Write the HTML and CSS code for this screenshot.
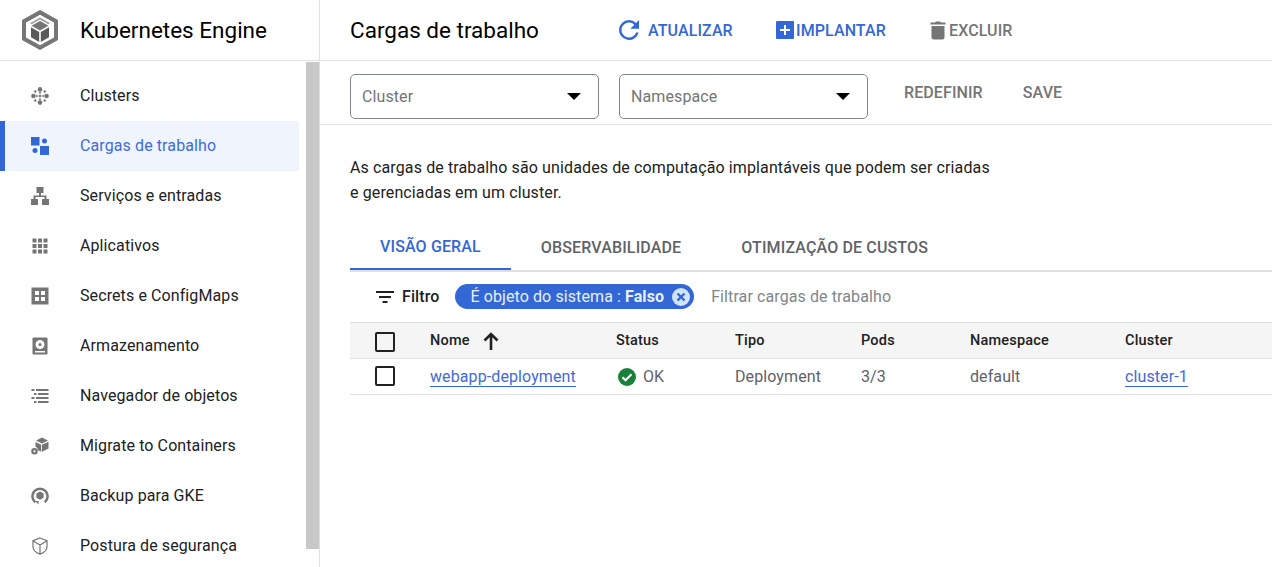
FILE: index.html
```html
<!DOCTYPE html>
<html lang="en">
<head>
    <meta charset="UTF-8">
    <title>Cargas de trabalho - Kubernetes Engine</title>
    <link rel="stylesheet" href="styles.css">
</head>
<body>
<div class="app">
    <aside class="sidebar">
        <div class="brand">
            <svg class="brand-logo" viewBox="0 0 36 40" width="36" height="40">
                <path d="M18 0 L36 10 V30 L18 40 L0 30 V10 Z M18 4.800 L4 12.600 V27.400 L18 35.200 L32 27.400 V12.600 Z" fill="#757575" fill-rule="evenodd"/>
                <path d="M18 7.500 L28 13.200 L26.300 14.200 L18 9.500 L9.700 14.200 L8 13.200 Z" fill="#9e9e9e"/>
                <path d="M18 11 L26.500 15.800 L18 20.600 L9.500 15.800 Z" fill="#757575"/>
                <path d="M9 17.200 L17.200 21.900 V32 L9 27.300 Z M27 17.200 L18.800 21.900 V32 L27 27.300 Z" fill="#5a5a5a"/>
            </svg>
            <span class="brand-name">Kubernetes Engine</span>
        </div>
        <div class="nav-wrap">
            <nav class="nav">
                <a class="nav-item">
                    <svg class="nav-icon" viewBox="0 0 18 18"><g fill="#757575"><circle cx="9" cy="2.400" r="2.300"/><circle cx="9" cy="15.600" r="2.300"/><circle cx="2.400" cy="9" r="2.300"/><circle cx="15.600" cy="9" r="2.300"/><circle cx="9" cy="9" r="1.300"/><circle cx="9" cy="5.800" r="1"/><circle cx="9" cy="12.200" r="1"/><circle cx="5.800" cy="9" r="1"/><circle cx="12.200" cy="9" r="1"/><circle cx="4.300" cy="4.500" r="1.200"/><circle cx="13.700" cy="4.500" r="1.200"/><circle cx="4.300" cy="13.500" r="1.200"/><circle cx="13.700" cy="13.500" r="1.200"/></g></svg>
                    <span>Clusters</span>
                </a>
                <a class="nav-item active">
                    <svg class="nav-icon" viewBox="0 0 18 18"><g fill="#3367d6"><rect x="0" y="0" width="8.500" height="8.500"/><rect x="9" y="9" width="9" height="9"/><circle cx="13.500" cy="4" r="2.500"/><circle cx="4" cy="13.500" r="2.500"/></g></svg>
                    <span>Cargas de trabalho</span>
                </a>
                <a class="nav-item">
                    <svg class="nav-icon" viewBox="0 0 18 18"><path fill="#757575" d="M5.500 0h7v6h-2.500v2.500h5.500v3.500h2.500v6h-7v-6h2.500v-2h-9v2h2.500v6h-7v-6h2.500v-3.500h5.500v-2.500h-2.500z"/></svg>
                    <span>Serviços e entradas</span>
                </a>
                <a class="nav-item">
                    <svg class="nav-icon" viewBox="0 0 18 18"><path fill="#757575" d="M1.500 1.500h4v4h-4zM7 1.500h4v4h-4zM12.500 1.500h4v4h-4zM1.500 7h4v4h-4zM7 7h4v4h-4zM12.500 7h4v4h-4zM1.500 12.500h4v4h-4zM7 12.500h4v4h-4zM12.500 12.500h4v4h-4z"/></svg>
                    <span>Aplicativos</span>
                </a>
                <a class="nav-item">
                    <svg class="nav-icon" viewBox="0 0 18 18"><path fill="#757575" fill-rule="evenodd" d="M0.500 0.500h17v17h-17zM4 4v4h4v-4zM10 4v4h4v-4zM4 10v4h4v-4zM10 10v4h4v-4z"/></svg>
                    <span>Secrets e ConfigMaps</span>
                </a>
                <a class="nav-item">
                    <svg class="nav-icon" viewBox="0 0 18 18"><path fill="#757575" fill-rule="evenodd" d="M2.500 0.500h13a1 1 0 0 1 1 1v15a1 1 0 0 1-1 1h-13a1 1 0 0 1-1-1v-15a1 1 0 0 1 1-1zM9 3a4.500 4.500 0 1 0 0 9a4.500 4.500 0 0 0 0-9zM4 14v1.500h10v-1.500z"/><circle cx="9" cy="7.500" r="1.500" fill="#757575"/></svg>
                    <span>Armazenamento</span>
                </a>
                <a class="nav-item">
                    <svg class="nav-icon" viewBox="0 0 18 18"><path fill="#757575" d="M0.500 2h3v2h-3zM5 2h12.500v2h-12.500zM3 6h2.500v2h-2.500zM7 6h10.500v2h-10.500zM0.500 10h3v2h-3zM5 10h12.500v2h-12.500zM3 14h2.500v2h-2.500zM7 14h10.500v2h-10.500z"/></svg>
                    <span>Navegador de objetos</span>
                </a>
                <a class="nav-item">
                    <svg class="nav-icon" viewBox="0 0 18 18"><path fill="#757575" d="M11 0.500l6 3-6 3-6-3zM4.500 5l5.700 2.800v7l-3.200-1.600a4 4 0 0 0-2.500-3.400zM17.500 4.800v6.700l-6.500 3.300v-7z"/><path fill="#757575" fill-rule="evenodd" d="M3.500 11a3.300 3.300 0 1 0 0 6.600a3.300 3.300 0 0 0 0-6.600zM3.500 13.200a1.100 1.100 0 1 1 0 2.200a1.100 1.100 0 0 1 0-2.200z"/></svg>
                    <span>Migrate to Containers</span>
                </a>
                <a class="nav-item">
                    <svg class="nav-icon" viewBox="0 0 18 18"><path fill="none" stroke="#757575" stroke-width="2.400" d="M4.200 15.200a7.600 7.600 0 1 1 9.600 0"/><path fill="#757575" d="M9 4.600l3.600 2v4.200l-3.600 2-3.600-2v-4.200zM4 14h3.500v3.500z"/></svg>
                    <span>Backup para GKE</span>
                </a>
                <a class="nav-item">
                    <svg class="nav-icon" viewBox="0 0 18 18"><path fill="none" stroke="#757575" stroke-width="1.200" d="M9 1l7 2.700v6c0 3.500-3 6-7 7.500c-4-1.500-7-4-7-7.500v-6zM2.300 3.900l6.700 4.100l6.700-4.100M9 8v9"/></svg>
                    <span>Postura de segurança</span>
                </a>
            </nav>
            <div class="scrollbar"></div>
        </div>
    </aside>

    <main class="main">
        <header class="topbar">
            <h1 class="page-title">Cargas de trabalho</h1>
            <div class="actions">
                <a class="action blue refresh">
                    <svg viewBox="0 0 24 24" width="30" height="30"><path fill="#3367d6" d="M17.650 6.350A7.960 7.960 0 0 0 12 4a8 8 0 1 0 7.740 10h-2.080A6 6 0 1 1 12 6c1.660 0 3.140.69 4.220 1.780L13 11h7V4z"/></svg>
                    <span>ATUALIZAR</span>
                </a>
                <a class="action blue deploy">
                    <svg viewBox="0 0 18 18" width="18" height="18"><path fill="#3367d6" fill-rule="evenodd" d="M1 0h16a1 1 0 0 1 1 1v16a1 1 0 0 1-1 1h-16a1 1 0 0 1-1-1v-16a1 1 0 0 1 1-1zM8 4v4h-4v2h4v4h2v-4h4v-2h-4v-4z"/></svg>
                    <span>IMPLANTAR</span>
                </a>
                <a class="action grey remove">
                    <svg viewBox="0 0 16 20" width="16" height="20"><path fill="#757575" d="M1.500 6h13v11.500a2 2 0 0 1-2 2h-9a2 2 0 0 1-2-2zM0.500 2.500h4.500l1-1h4l1 1h4.500v2h-15z"/></svg>
                    <span>EXCLUIR</span>
                </a>
            </div>
        </header>

        <div class="filterbar">
            <div class="select"><span>Cluster</span><i class="caret"></i></div>
            <div class="select"><span>Namespace</span><i class="caret"></i></div>
            <a class="text-btn reset">REDEFINIR</a>
            <a class="text-btn">SAVE</a>
        </div>

        <section class="content">
            <p class="intro">As cargas de trabalho são unidades de computação implantáveis que podem ser criadas e gerenciadas em um cluster.</p>

            <div class="tabs">
                <a class="tab active">VISÃO GERAL</a>
                <a class="tab">OBSERVABILIDADE</a>
                <a class="tab">OTIMIZAÇÃO DE CUSTOS</a>
            </div>

            <div class="table-filter">
                <svg class="filter-icon" viewBox="0 0 18 12" width="18" height="12"><path fill="#212121" d="M0 0h18v2h-18zM3 5h12v2h-12zM6.500 10h5v2h-5z"/></svg>
                <span class="filter-label">Filtro</span>
                <span class="chip">
                    <span>É objeto do sistema : <b>Falso</b></span>
                    <svg viewBox="0 0 18 18" width="18" height="18"><circle cx="9" cy="9" r="9" fill="#d2e3fc"/><path stroke="#3367d6" stroke-width="2.400" d="M5.500 5.500l7 7M12.500 5.500l-7 7"/></svg>
                </span>
                <span class="filter-hint">Filtrar cargas de trabalho</span>
            </div>

            <div class="table">
                <div class="row head">
                    <div class="cell check"><i class="box"></i></div>
                    <div class="cell name">Nome
                        <svg class="sort" viewBox="0 0 16 18" width="16" height="18"><path fill="none" stroke="#212121" stroke-width="2.600" d="M8 18v-15M1.500 8.500l6.500-6.500l6.500 6.500"/></svg>
                    </div>
                    <div class="cell status">Status</div>
                    <div class="cell type">Tipo</div>
                    <div class="cell pods">Pods</div>
                    <div class="cell ns">Namespace</div>
                    <div class="cell cluster">Cluster</div>
                </div>
                <div class="row">
                    <div class="cell check"><i class="box"></i></div>
                    <div class="cell name"><a class="link">webapp-deployment</a></div>
                    <div class="cell status">
                        <svg class="status-icon" viewBox="0 0 18 18" width="18" height="18"><circle cx="9" cy="9" r="9" fill="#188038"/><path fill="none" stroke="#fff" stroke-width="2" d="M4.500 9.300l3 3l6-6"/></svg>
                        <span>OK</span>
                    </div>
                    <div class="cell type">Deployment</div>
                    <div class="cell pods">3/3</div>
                    <div class="cell ns">default</div>
                    <div class="cell cluster"><a class="link">cluster-1</a></div>
                </div>
            </div>
        </section>
    </main>
</div>
</body>
</html>
```

FILE: styles.css
```css
html, body {
    margin: 0;
    height: 100%;
    overflow: hidden;
}

body {
    font-family: Roboto, "Liberation Sans", sans-serif;
    font-size: 16px;
    letter-spacing: .1px;
    color: #202124;
    background: white;
}

.app {
    display: flex;
    height: 567px;
}

/* sidebar */
.sidebar {
    width: 319px;
    flex-shrink: 0;
    border-right: 1px solid #e0e0e0;
}

.brand {
    display: flex;
    align-items: center;
    height: 60px;
    border-bottom: 1px solid #e0e0e0;
    margin-right: -1px;
}

.brand-logo {
    margin-left: 22px;
    flex-shrink: 0;
}

.brand-name {
    margin-left: 22px;
    font-size: 22.500px;
    letter-spacing: 0;
    color: #000;
}

.nav-wrap {
    display: flex;
    height: 506px;
    overflow: hidden;
}

.nav {
    width: 299px;
    padding-top: 10px;
    flex-shrink: 0;
}

.nav-item {
    display: flex;
    align-items: center;
    height: 50px;
    color: #202124;
}

.nav-item span {
    padding-bottom: 2px;
}

.nav-icon {
    width: 18px;
    height: 18px;
    margin-left: 31px;
    margin-right: 31px;
    flex-shrink: 0;
}

.nav-item.active {
    background: #f0f5fd;
    color: #3f6bd8;
    box-shadow: inset 5px 0 0 #3367d6;
}

.scrollbar {
    width: 13px;
    height: 487px;
    margin: 1px 0 0 7px;
    background: #c8c8c8;
}

/* main */
.main {
    flex: 1;
    min-width: 0;
}

.topbar {
    display: flex;
    align-items: center;
    height: 60px;
    padding-left: 30px;
    border-bottom: 1px solid #e0e0e0;
}

.page-title {
    margin: 0;
    width: 268px;
    font-size: 22.500px;
    font-weight: 400;
    letter-spacing: 0;
    color: #000;
}

.actions {
    display: flex;
    align-items: center;
}

.action {
    display: flex;
    align-items: center;
    font-weight: 500;
}

.action.blue {
    color: #3367d6;
}

.action.grey {
    color: #757575;
}

.refresh {
    gap: 4px;
    width: 162px;
    margin-left: -4px;
}

.deploy {
    gap: 2px;
    width: 154px;
}

.remove {
    gap: 3px;
}

.filterbar {
    display: flex;
    align-items: flex-start;
    box-sizing: border-box;
    height: 64px;
    padding: 13px 0 0 30px;
    border-bottom: 1px solid #e0e0e0;
}

.select {
    display: flex;
    align-items: center;
    justify-content: space-between;
    box-sizing: border-box;
    width: 249px;
    height: 45px;
    margin-right: 20px;
    padding: 0 17px 0 11px;
    border: 1px solid #80868b;
    border-radius: 5px;
    color: #757575;
}

.caret {
    border-left: 7px solid transparent;
    border-right: 7px solid transparent;
    border-top: 7px solid #000;
}

.text-btn {
    font-weight: 500;
    color: #757575;
    margin: 9px 20px 0;
}

.text-btn.reset {
    margin-left: 16px;
}

.content {
    padding: 30px 0 0 30px;
}

.intro {
    margin: 0;
    width: 645px;
    line-height: 25px;
    letter-spacing: .12px;
    color: #212121;
}

.tabs {
    display: flex;
    box-sizing: border-box;
    height: 47px;
    margin-top: 20px;
    border-bottom: 2px solid #e0e0e0;
}

.tab {
    display: flex;
    align-items: center;
    box-sizing: border-box;
    height: 45px;
    padding: 0 30px;
    font-weight: 500;
    letter-spacing: .14px;
    color: #5f6368;
}

.tab.active {
    color: #3367d6;
    border-bottom: 2px solid #3367d6;
}

.table-filter {
    display: flex;
    align-items: center;
    box-sizing: border-box;
    height: 50px;
    padding: 0 0 1px 26px;
}

.filter-label {
    margin-left: 8px;
    font-weight: 500;
    color: #212121;
}

.chip {
    display: flex;
    align-items: center;
    gap: 8px;
    height: 25px;
    margin-left: 16px;
    padding: 0 4px 0 15px;
    border-radius: 13px;
    background: #3367d6;
    color: #e8f0fe;
}

.chip b {
    font-weight: 700;
}

.filter-hint {
    margin-left: 17px;
    color: #80868b;
}

.row {
    display: flex;
    align-items: center;
    height: 35px;
    border-bottom: 1px solid #e0e0e0;
    color: #5f6368;
}

.row .box {
    margin-top: -1px;
}

.row.head {
    background: #f5f5f5;
    border-top: 1px solid #e0e0e0;
    font-size: 14.500px;
    font-weight: 500;
    letter-spacing: .2px;
    color: #212121;
}

.row.head .box {
    margin-top: 3px;
}

.cell {
    display: flex;
    align-items: center;
    flex-shrink: 0;
}

.check {
    width: 80px;
    padding-left: 25px;
    box-sizing: border-box;
}

.box {
    display: block;
    box-sizing: border-box;
    width: 20px;
    height: 20px;
    border: 2px solid #212121;
    border-radius: 2px;
}

.name {
    width: 186px;
}

.sort {
    margin-left: 13px;
}

.status {
    width: 119px;
    gap: 7px;
}

.status-icon {
    margin-left: 2px;
}

.type {
    width: 126px;
}

.pods {
    width: 109px;
}

.ns {
    width: 155px;
}

.link {
    color: #3f6bd8;
    border-bottom: 1px solid #3367d6;
}
```
